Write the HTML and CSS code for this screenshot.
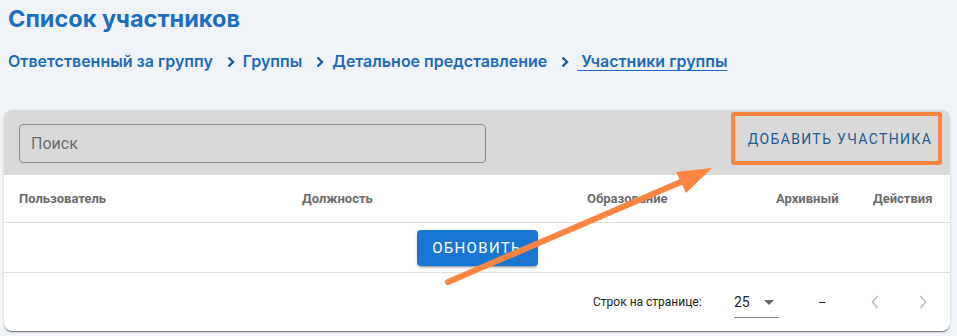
FILE: index.html
```html
<!DOCTYPE html>
<html lang="ru">
<head>
    <meta charset="UTF-8">
    <title>Список участников</title>
    <link rel="stylesheet" href="styles.css">
</head>
<body>
    <h1 class="page-title">Список участников</h1>

    <nav class="breadcrumbs">
        <a class="crumb">Ответственный за группу</a>
        <svg class="crumb-sep" viewBox="0 0 10 12"><polyline points="2.5,1.5 7,6 2.5,10.5"/></svg>
        <a class="crumb">Группы</a>
        <svg class="crumb-sep" viewBox="0 0 10 12"><polyline points="2.5,1.5 7,6 2.5,10.5"/></svg>
        <a class="crumb">Детальное представление</a>
        <svg class="crumb-sep" viewBox="0 0 10 12"><polyline points="2.5,1.5 7,6 2.5,10.5"/></svg>
        <a class="crumb crumb-current">&nbsp;Участники группы</a>
    </nav>

    <div class="card">
        <div class="toolbar">
            <div class="search">Поиск</div>
            <button class="add-button">Добавить участника</button>
        </div>

        <div class="table-head">
            <div>Пользователь</div>
            <div>Должность</div>
            <div>Образование</div>
            <div>Архивный</div>
            <div>Действия</div>
        </div>

        <div class="table-row">
            <button class="refresh-button">Обновить</button>
        </div>

        <div class="pagination">
            <span class="rows-label">Строк на странице:</span>
            <div class="rows-select">
                <span>25</span>
                <span class="select-caret"></span>
            </div>
            <span class="range">–</span>
            <svg class="page-arrow" viewBox="0 0 10 16"><polyline points="7.5,2 2.5,8 7.5,14"/></svg>
            <svg class="page-arrow" viewBox="0 0 10 16"><polyline points="2.5,2 7.5,8 2.5,14"/></svg>
        </div>
    </div>

    <svg class="pointer" viewBox="0 0 957 336">
        <line x1="448" y1="282" x2="690" y2="178"/>
        <polygon points="712,168 676,172 686,193"/>
    </svg>
</body>
</html>
```

FILE: styles.css
```css
body {
    margin: 0;
    padding: 0 7px 0 4px;
    background-color: #f0f4f8;
    font-family: Inter, "Noto Sans", sans-serif;
    position: relative;
    height: 336px;
    overflow: hidden;
}
.page-title {
    margin: 0 0 0 4px;
    padding-top: 4px;
    font-size: 23.5px;
    line-height: 30px;
    font-weight: 700;
    color: #1c6fc0;
}
.breadcrumbs {
    display: flex;
    align-items: center;
    margin: 16px 0 0 4px;
    height: 22px;
}
.crumb {
    font-size: 16px;
    font-weight: 600;
    color: #1c6ab8;
}
.crumb-current {
    text-decoration: underline;
    text-underline-offset: 3px;
}
.crumb-sep {
    width: 10px;
    height: 12px;
    margin: 2px 7px 0 13px;
    fill: none;
    stroke: #1a5a9a;
    stroke-width: 2.4;
}
.card {
    margin-top: 38px;
    background: #fff;
    border-radius: 8px;
    overflow: hidden;
    box-shadow: 0 2px 1px -1px rgba(0,0,0,0.35), 0 1px 1px 0 rgba(0,0,0,0.2), 0 1px 3px 0 rgba(0,0,0,0.12);
    font-family: Roboto, "Liberation Sans", sans-serif;
}
.toolbar {
    display: flex;
    align-items: center;
    justify-content: space-between;
    height: 65px;
    padding: 0 8px 0 15px;
    background: #d9d9d9;
}
.search {
    box-sizing: border-box;
    width: 467px;
    height: 39px;
    margin-top: 1px;
    padding-left: 11px;
    display: flex;
    align-items: center;
    border: 1px solid #8c8c8c;
    border-radius: 4px;
    font-size: 16px;
    color: #6b6b6b;
}
.add-button {
    box-sizing: border-box;
    width: 211px;
    height: 53px;
    margin-top: -8px;
    padding: 0 0 0 7px;
    background: transparent;
    border: 4px solid #ff8440;
    border-radius: 3px;
    font-family: Roboto, "Liberation Sans", sans-serif;
    font-size: 14px;
    letter-spacing: 1.35px;
    text-transform: uppercase;
    color: #1f5a94;
}
.table-head {
    display: grid;
    grid-template-columns: 283px 285px 189px 97px 1fr;
    align-items: center;
    height: 47px;
    padding: 0 19px 0 15px;
    border-bottom: 1px solid #e0e0e0;
    font-size: 13px;
    font-weight: 700;
    color: #6b6b6b;
}
.table-row {
    display: flex;
    justify-content: center;
    align-items: center;
    height: 49px;
    border-bottom: 1px solid #e0e0e0;
}
.refresh-button {
    width: 121px;
    height: 36px;
    border: none;
    border-radius: 4px;
    background: #1976d2;
    color: #fff;
    font-family: Roboto, "Liberation Sans", sans-serif;
    font-size: 15px;
    font-weight: 400;
    letter-spacing: 1.3px;
    text-transform: uppercase;
    box-shadow: 0 3px 1px -2px rgba(0,0,0,0.2), 0 2px 2px 0 rgba(0,0,0,0.14), 0 1px 5px 0 rgba(0,0,0,0.12);
}
.pagination {
    display: flex;
    align-items: center;
    height: 58px;
    padding-left: 589px;
    font-size: 13px;
    color: #222;
}
.pagination > * {
    flex-shrink: 0;
}
.rows-label {
    width: 141px;
    font-size: 12px;
}
.rows-select {
    display: flex;
    align-items: center;
    width: 45px;
    height: 30px;
    margin-top: 1px;
    border-bottom: 1px solid #888;
    font-size: 14px;
}
.select-caret {
    margin-left: 14px;
    border-left: 5px solid transparent;
    border-right: 5px solid transparent;
    border-top: 5px solid #666;
}
.range {
    margin-left: 39px;
    width: 52px;
}
.page-arrow {
    width: 10px;
    height: 16px;
    margin-right: 38px;
    fill: none;
    stroke: #bdbdbd;
    stroke-width: 1.6;
}
.page-arrow:last-child {
    margin-right: 0;
}
.pointer {
    position: absolute;
    left: 0;
    top: 0;
    width: 957px;
    height: 336px;
    pointer-events: none;
}
.pointer line {
    stroke: #ff8440;
    stroke-width: 6;
    stroke-linecap: round;
}
.pointer polygon {
    fill: #ff8440;
}
```
